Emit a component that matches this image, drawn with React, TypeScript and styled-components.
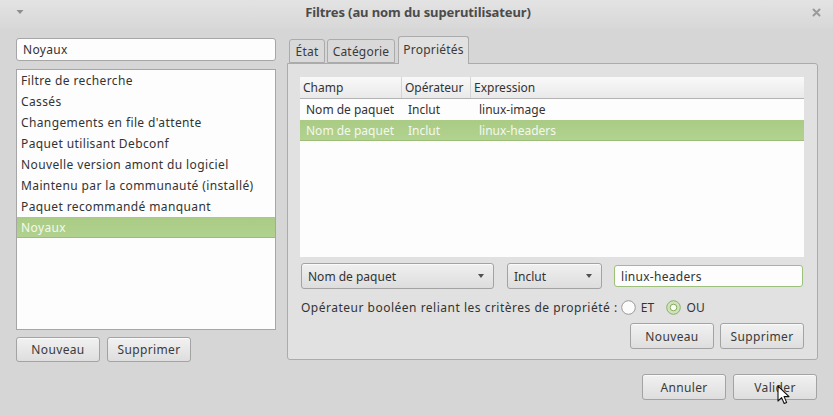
import React from 'react';
import styled, { createGlobalStyle } from 'styled-components';

const Global = createGlobalStyle`
  html, body { margin: 0; padding: 0; width: 833px; height: 416px; overflow: hidden; background: #d6d6d6; }
  body { font-family: "Noto Sans", "DejaVu Sans", sans-serif; font-size: 12px; color: #3c3c3c; }
  * { box-sizing: border-box; }
`;

const Window = styled.div`
  width: 833px;
  height: 416px;
  display: flex;
  flex-direction: column;
  background: #d6d6d6;
  position: relative;
`;

const TitleBar = styled.div`
  height: 28px;
  display: flex;
  align-items: center;
  padding: 0 12px 4px 16px;
  background: linear-gradient(#e3e3e3, #d8d8d8);
`;

const Title = styled.div`
  flex: 1;
  text-align: center;
  font-weight: bold;
  font-size: 13px;
  color: #4b4b4b;
  font-family: "Noto Sans", sans-serif;
  letter-spacing: -0.1px;
`;

const Body = styled.div`
  display: flex;
  flex-direction: column;
  padding: 8px 15px 0 16px;
`;

const MainRow = styled.div`
  display: flex;
  gap: 11px;
  height: 326px;
`;

const LeftCol = styled.div`
  width: 260px;
  display: flex;
  flex-direction: column;
  padding-top: 2px;
`;

const Entry = styled.div<{ $focus?: boolean; $w?: number }>`
  height: ${p => (p.$focus ? 22 : 23)}px;
  width: ${p => (p.$w ? `${p.$w}px` : 'auto')};
  background: #fdfdfd;
  border: 1px solid ${p => (p.$focus ? '#9dc07a' : '#a6a6a6')};
  border-radius: 3px;
  display: flex;
  align-items: center;
  padding: 0 6px;
  color: #333;
  font-size: 12px;
  letter-spacing: 0.3px;
`;

const List = styled.div`
  margin-top: 8px;
  height: 261px;
  background: #fdfdfd;
  border: 1px solid #a6a6a6;
  display: flex;
  flex-direction: column;
`;

const ListRow = styled.div<{ $sel?: boolean }>`
  height: 21px;
  display: flex;
  align-items: center;
  padding: 0 4px;
  letter-spacing: 0.38px;
  color: ${p => (p.$sel ? '#f4f8ef' : '#333')};
  background: ${p => (p.$sel ? 'linear-gradient(#a9cb84, #b1d28f)' : 'transparent')};
  border-bottom: 1px solid ${p => (p.$sel ? '#9bbd77' : 'transparent')};
  white-space: nowrap;
`;

const ButtonRow = styled.div<{ $gap: number; $end?: boolean }>`
  display: flex;
  gap: ${p => p.$gap}px;
  justify-content: ${p => (p.$end ? 'flex-end' : 'flex-start')};
`;

const Button = styled.div<{ $h?: number }>`
  width: 84px;
  height: ${p => p.$h ?? 25}px;
  border: 1px solid #a3a3a3;
  border-radius: 3px;
  background: linear-gradient(#f1f1f1, #dedede);
  display: flex;
  align-items: center;
  justify-content: center;
  color: #3a3a3a;
  font-size: 12px;
  letter-spacing: 0.35px;
  box-shadow: inset 0 1px 0 #fafafa;
`;

const LeftButtons = styled(ButtonRow)`
  margin-top: 7px;
`;

const RightCol = styled.div`
  flex: 1;
  display: flex;
  flex-direction: column;
`;

const Tabs = styled.div`
  height: 27px;
  display: flex;
  align-items: flex-end;
  padding-left: 2px;
  gap: 2px;
  position: relative;
  z-index: 1;
`;

const Tab = styled.div<{ $w: number; $active?: boolean }>`
  width: ${p => p.$w}px;
  height: ${p => (p.$active ? 28 : 24)}px;
  margin-left: ${p => (p.$active ? 1 : 0)}px;
  margin-bottom: ${p => (p.$active ? -1 : 0)}px;
  border: 1px solid #ababab;
  border-bottom: ${p => (p.$active ? 'none' : '1px solid #ababab')};
  border-radius: 3px 3px 0 0;
  background: ${p => (p.$active ? '#e1e1e1' : '#d9d9d9')};
  display: flex;
  align-items: ${p => (p.$active ? 'flex-start' : 'center')};
  padding-top: ${p => (p.$active ? 4 : 0)}px;
  justify-content: center;
  color: #3a3a3a;
  font-size: 12px;
  letter-spacing: 0.2px;
`;

const Panel = styled.div`
  height: 297px;
  border: 1px solid #ababab;
  border-radius: 0 3px 3px 3px;
  background: #e1e1e1;
  padding: 13px 13px 10px 12px;
  display: flex;
  flex-direction: column;
`;

const Tree = styled.div`
  height: 180px;
  background: #fdfdfd;
  display: flex;
  flex-direction: column;
`;

const TreeGrid = styled.div<{ $header?: boolean; $sel?: boolean }>`
  display: grid;
  grid-template-columns: 102px 69px 1fr;
  height: ${p => (p.$header ? 22 : 21)}px;
  align-items: center;
  background: ${p =>
    p.$header
      ? 'linear-gradient(#f9f9f9, #e9e9e9)'
      : p.$sel
      ? 'linear-gradient(#a9cb84, #b2d390)'
      : 'transparent'};
  border-bottom: 1px solid ${p => (p.$header ? '#b3b3b3' : p.$sel ? '#9bbd77' : 'transparent')};
  color: ${p => (p.$sel ? '#f4f8ef' : '#333')};
`;

const Cell = styled.div<{ $pad?: number; $sep?: boolean }>`
  height: 100%;
  display: flex;
  align-items: center;
  padding-left: ${p => p.$pad ?? 6}px;
  border-right: 1px solid ${p => (p.$sep ? '#d4d4d4' : 'transparent')};
  white-space: nowrap;
  overflow: hidden;
`;

const ControlsRow = styled.div`
  margin-top: 6px;
  padding-left: 1px;
  display: flex;
  align-items: center;
  height: 26px;
`;

const Combo = styled.div<{ $w: number; $mr: number }>`
  width: ${p => p.$w}px;
  margin-right: ${p => p.$mr}px;
  height: 26px;
  border: 1px solid #a3a3a3;
  border-radius: 3px;
  background: linear-gradient(#f0f0f0, #dddddd);
  display: flex;
  align-items: center;
  justify-content: space-between;
  padding: 0 9px 0 6px;
  color: #333;
  box-shadow: inset 0 1px 0 #fafafa;
`;

const Arrow = styled.span`
  width: 0;
  height: 0;
  border-left: 3.5px solid transparent;
  border-right: 3.5px solid transparent;
  border-top: 4px solid #505050;
`;

const BoolRow = styled.div`
  margin-top: 8px;
  height: 20px;
  padding-left: 1px;
  display: flex;
  align-items: center;
  color: #333;
  white-space: nowrap;
  letter-spacing: 0.5px;
`;

const RadioItem = styled.div<{ $ml: number }>`
  display: flex;
  align-items: center;
  gap: 5px;
  margin-left: ${p => p.$ml}px;
  letter-spacing: 0.2px;
`;

const PanelButtons = styled(ButtonRow)`
  margin-top: 6px;
`;

const Footer = styled(ButtonRow)`
  margin-top: 12px;
  padding-right: 1px;
`;

const Cursor = styled.svg`
  position: absolute;
  left: 777px;
  top: 385px;
`;

const Radio = ({ on }: { on?: boolean }) =>
  on ? (
    <svg width="15" height="15" viewBox="0 0 15 15">
      <circle cx="7.5" cy="7.5" r="6.8" fill="#cfe3b9" stroke="#8db16a" strokeWidth="1" />
      <circle cx="7.5" cy="7.5" r="3.3" fill="#fbfdf8" stroke="#86aa63" strokeWidth="1" />
    </svg>
  ) : (
    <svg width="15" height="15" viewBox="0 0 15 15">
      <circle cx="7.5" cy="7.5" r="6.8" fill="#fbfbfb" stroke="#9a9a9a" strokeWidth="1" />
    </svg>
  );

const items = [
  'Filtre de recherche',
  'Cassés',
  "Changements en file d'attente",
  'Paquet utilisant Debconf',
  'Nouvelle version amont du logiciel',
  'Maintenu par la communauté (installé)',
  'Paquet recommandé manquant',
  'Noyaux',
];

export default function App() {
  return (
    <Window>
      <Global />
      <TitleBar>
        <svg width="8" height="6" viewBox="0 0 8 6">
          <path d="M0.5 1 L7.5 1 L4 5 Z" fill="#8e8e8e" />
        </svg>
        <Title>Filtres (au nom du superutilisateur)</Title>
        <svg width="9" height="9" viewBox="0 0 9 9">
          <path d="M1.5 1.5 L7.5 7.5 M7.5 1.5 L1.5 7.5" stroke="#9a9a9a" strokeWidth="2" strokeLinecap="round" />
        </svg>
      </TitleBar>
      <Body>
        <MainRow>
          <LeftCol>
            <Entry>Noyaux</Entry>
            <List>
              {items.map((t, i) => (
                <ListRow key={t} $sel={i === items.length - 1}>
                  {t}
                </ListRow>
              ))}
            </List>
            <LeftButtons $gap={7}>
              <Button>Nouveau</Button>
              <Button>Supprimer</Button>
            </LeftButtons>
          </LeftCol>
          <RightCol>
            <Tabs>
              <Tab $w={36}>État</Tab>
              <Tab $w={68}>Catégorie</Tab>
              <Tab $w={71} $active>
                Propriétés
              </Tab>
            </Tabs>
            <Panel>
              <Tree>
                <TreeGrid $header>
                  <Cell $pad={3} $sep>Champ</Cell>
                  <Cell $pad={3} $sep>Opérateur</Cell>
                  <Cell $pad={3}>Expression</Cell>
                </TreeGrid>
                <TreeGrid>
                  <Cell>Nom de paquet</Cell>
                  <Cell>Inclut</Cell>
                  <Cell $pad={8}>linux-image</Cell>
                </TreeGrid>
                <TreeGrid $sel>
                  <Cell>Nom de paquet</Cell>
                  <Cell>Inclut</Cell>
                  <Cell $pad={8}>linux-headers</Cell>
                </TreeGrid>
              </Tree>
              <ControlsRow>
                <Combo $w={193} $mr={13}>
                  <span>Nom de paquet</span>
                  <Arrow />
                </Combo>
                <Combo $w={95} $mr={12}>
                  <span>Inclut</span>
                  <Arrow />
                </Combo>
                <Entry $focus $w={189}>linux-headers</Entry>
              </ControlsRow>
              <BoolRow>
                Opérateur booléen reliant les critères de propriété :
                <RadioItem $ml={3}>
                  <Radio />
                  ET
                </RadioItem>
                <RadioItem $ml={12}>
                  <Radio on />
                  OU
                </RadioItem>
              </BoolRow>
              <PanelButtons $gap={6} $end>
                <Button $h={26}>Nouveau</Button>
                <Button $h={26}>Supprimer</Button>
              </PanelButtons>
            </Panel>
          </RightCol>
        </MainRow>
        <Footer $gap={7} $end>
          <Button $h={26}>Annuler</Button>
          <Button $h={26}>Valider</Button>
        </Footer>
      </Body>
      <Cursor width="13" height="20" viewBox="0 0 13 20">
        <path
          d="M1 1 L1 16 L4.6 12.6 L7.2 18.5 L9.6 17.4 L7.1 11.6 L12 11.6 Z"
          fill="#ffffff"
          stroke="#111111"
          strokeWidth="1.1"
          strokeLinejoin="round"
        />
      </Cursor>
    </Window>
  );
}
